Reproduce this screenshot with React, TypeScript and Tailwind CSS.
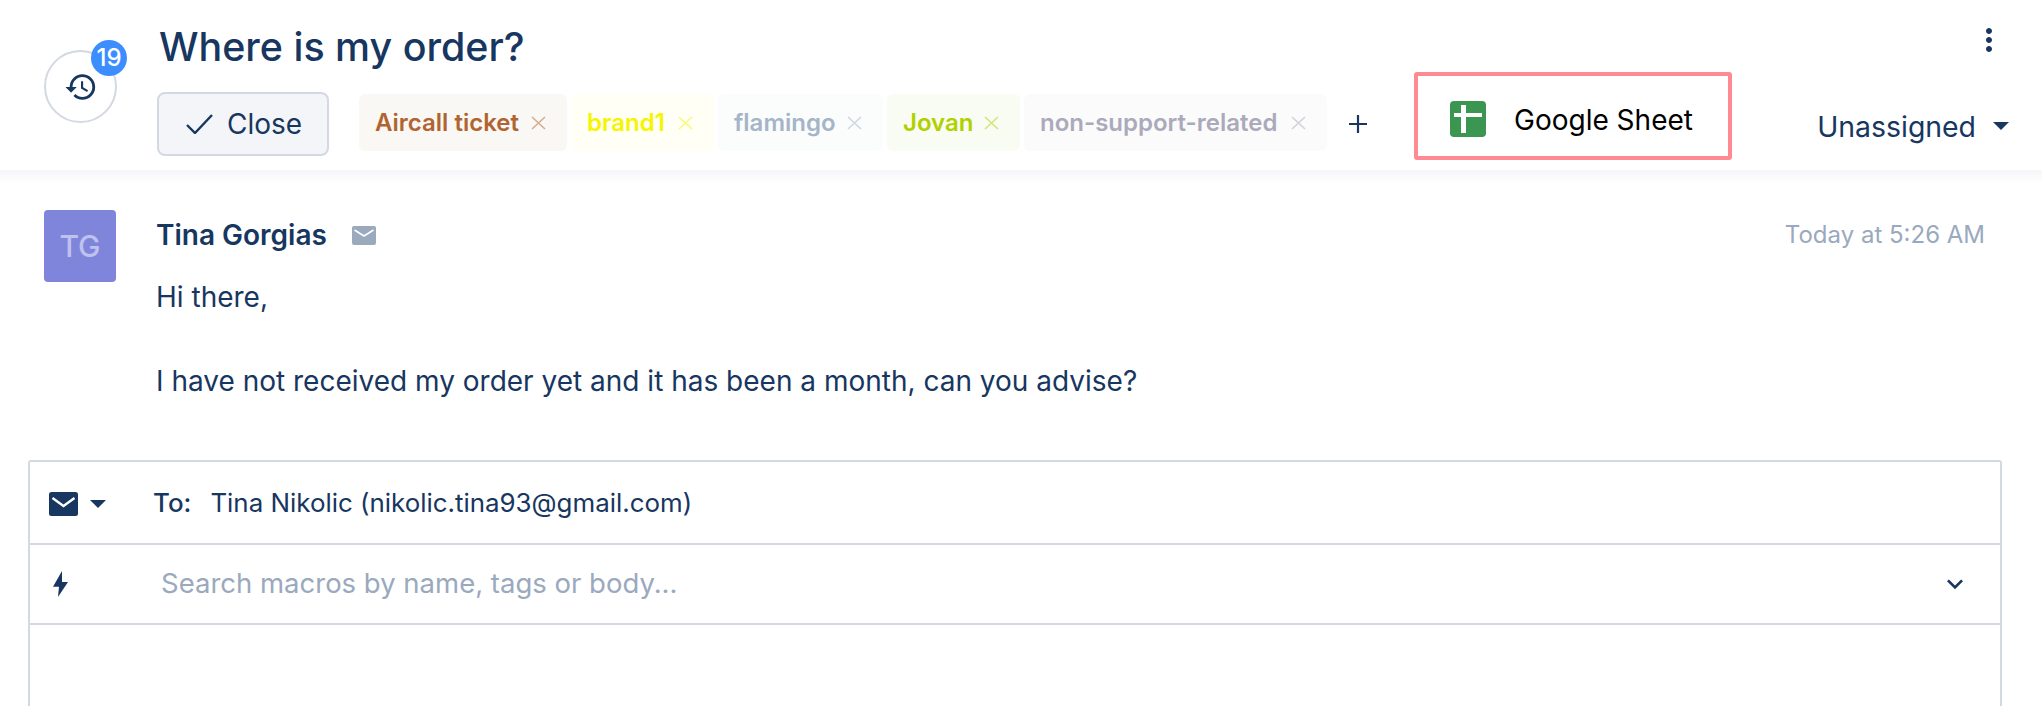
// Ticket view: header with tags and Google Sheet action, first message, reply composer
import { MdHistory, MdMoreVert, MdKeyboardArrowDown } from "react-icons/md";

const tags = [
  { label: "Aircall ticket", text: "text-[#b16431]", bg: "bg-[#f9f8f4]", w: "w-[208px]" },
  { label: "brand1", text: "text-[#f5f500]", bg: "bg-[#fffff5]", w: "w-[143px]" },
  { label: "flamingo", text: "text-[#a5b5c7]", bg: "bg-[#fbfcfc]", w: "w-[165px]" },
  { label: "Jovan", text: "text-[#b0d000]", bg: "bg-[#f9fcf2]", w: "w-[133px]" },
  { label: "non-support-related", text: "text-[#abaabb]", bg: "bg-[#fbfbfc]", w: "w-[303px]" },
];

function Caret({ className }: { className: string }) {
  return (
    <svg viewBox="0 0 16 8" className={className} fill="currentColor">
      <path d="M0 0h16L8 8z" />
    </svg>
  );
}

function Tag({ label, text, bg, w }: { label: string; text: string; bg: string; w: string }) {
  return (
    <div className={`flex h-[57px] items-center justify-between rounded-md pl-[16px] pr-[21px] ${bg} ${w} ${text}`}>
      <span className="text-[24px] font-semibold whitespace-nowrap">{label}</span>
      <svg viewBox="0 0 15 14" className="h-[14px] w-[15px] opacity-50" fill="none" stroke="currentColor" strokeWidth="1.6">
        <path d="M1 1l13 12M14 1L1 13" />
      </svg>
    </div>
  );
}

export default function App() {
  return (
    <div className="h-[706px] w-[2042px] overflow-hidden bg-white font-['Inter',sans-serif] text-[#173660]">
      {/* Header */}
      <header className="flex h-[170px] items-start">
        <div className="relative mt-[50px] ml-[44px] flex h-[73px] w-[73px] items-center justify-center rounded-full border-2 border-[#d3d9e2]">
          <MdHistory className="h-[34px] w-[34px]" />
          <span className="absolute -top-[12px] -right-[12px] flex h-[36px] w-[36px] items-center justify-center rounded-full bg-[#3c8eff] text-[24px] font-medium text-white">
            19
          </span>
        </div>

        <div className="ml-[40px] flex flex-col">
          <h1 className="mt-[21px] h-[52px] pl-[2px] text-[39.4px] leading-[52px] font-medium">Where is my order?</h1>
          <div className="mt-[19px] flex items-center">
            <button className="flex h-[64px] w-[172px] items-center justify-center gap-[14px] rounded-lg border-2 border-[#d3d9e2] bg-[#f3f5f8] pl-[2px] text-[28px]">
              <svg viewBox="0 0 27 20" className="h-[20px] w-[27px]" fill="none" stroke="currentColor" strokeWidth="2.4">
                <path d="M1 11l8 8L26 1" />
              </svg>
              Close
            </button>
            <div className="mb-[3px] ml-[30px] flex gap-[4px]">
              {tags.map((t) => (
                <Tag key={t.label} {...t} />
              ))}
            </div>
            <svg viewBox="0 0 18 18" className="ml-[22px] h-[18px] w-[18px]" fill="none" stroke="currentColor" strokeWidth="2.2">
              <path d="M9 0v18M0 9h18" />
            </svg>
          </div>
        </div>

        <div className="mt-[72px] ml-[47px] flex h-[88px] w-[318px] items-center rounded-[3px] border-4 border-[#ff8a91] pt-[6px] pl-[32px] text-black">
          <div className="relative h-[36px] w-[36px] rounded-[4px] bg-[#3a9650]">
            <span className="absolute top-[4px] left-[11px] h-[28px] w-[5px] bg-white" />
            <span className="absolute top-[12px] left-[4px] h-[4px] w-[28px] bg-white" />
          </div>
          <span className="ml-[28px] pt-[2px] text-[28px] whitespace-nowrap">Google Sheet</span>
        </div>

        <div className="flex flex-1 flex-col items-end pr-[33px]">
          <MdMoreVert className="mt-[22px] mr-[2px] h-[36px] w-[36px]" />
          <div className="mt-[48px] flex items-center">
            <span className="text-[28.4px]">Unassigned</span>
            <Caret className="mb-[3px] ml-[17px] h-[8px] w-[16px]" />
          </div>
        </div>
      </header>
      <div className="h-[14px] bg-gradient-to-b from-[#f5f6f9] to-white" />

      {/* Message */}
      <section className="flex pt-[26px] pr-[57px] pl-[44px]">
        <div className="flex h-[72px] w-[72px] shrink-0 items-center justify-center rounded-[4px] bg-[#8085dc] text-[30px] font-medium text-white/50">
          TG
        </div>
        <div className="ml-[40px] flex-1">
          <div className="flex h-[48px] items-center justify-between pt-[2px]">
            <div className="flex items-center">
              <span className="text-[28px] font-semibold">Tina Gorgias</span>
              <svg viewBox="0 0 24 19" className="ml-[25px] h-[19px] w-[24px]">
                <rect width="24" height="19" rx="2" fill="#9aa9bd" />
                <path d="M2.5 4l9.5 6 9.5-6" fill="none" stroke="#fff" strokeWidth="1.6" />
              </svg>
            </div>
            <span className="text-[24px] text-[#9aa9bd]">Today at 5:26 AM</span>
          </div>
          <div className="mt-[18px] text-[28px] leading-[42px]">
            <p>Hi there,</p>
            <p className="mt-[42px]">I have not received my order yet and it has been a month, can you advise?</p>
          </div>
        </div>
      </section>

      {/* Composer */}
      <section className="mt-[58px] ml-[28px] w-[1974px] rounded-t-[3px] border-x-2 border-t-2 border-[#d3d9e2]">
        <div className="flex h-[83px] items-center border-b-2 border-[#d3d9e2] pt-[2px] pl-[19px] text-[25.9px]">
          <svg viewBox="0 0 29 24" className="h-[24px] w-[29px]">
            <rect width="29" height="24" rx="2.5" fill="#173660" />
            <path d="M3.5 6l11 8 11-8" fill="none" stroke="#fff" strokeWidth="2.4" />
          </svg>
          <Caret className="ml-[12px] h-[8px] w-[16px]" />
          <span className="ml-[47px] font-medium">To:</span>
          <span className="ml-[19px] whitespace-nowrap">Tina Nikolic (nikolic.tina93@gmail.com)</span>
        </div>
        <div className="flex h-[80px] items-center border-b-2 border-[#d3d9e2] pr-[29px] pl-[22px]">
          <svg viewBox="0 0 17 26" className="h-[26px] w-[17px]" fill="currentColor">
            <path d="M10 0L1 15.7h6L6 26l10-15h-6z" />
          </svg>
          <span className="ml-[92px] flex-1 text-[27.5px] text-[#9aa9bd]">Search macros by name, tags or body...</span>
          <MdKeyboardArrowDown className="h-[32px] w-[32px]" />
        </div>
        <div className="h-[100px]" />
      </section>
    </div>
  );
}
